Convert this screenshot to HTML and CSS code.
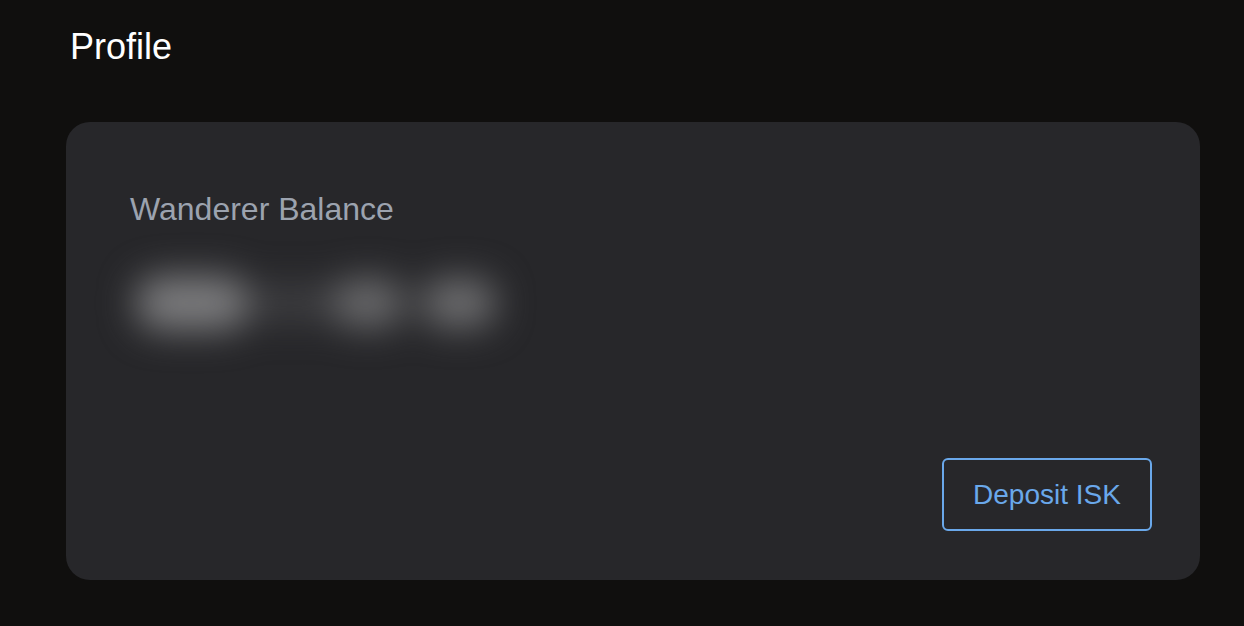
FILE: index.html
```html
<!DOCTYPE html>
<html lang="en">
<head>
<meta charset="utf-8">
<title>Profile</title>
<link rel="stylesheet" href="styles.css">
</head>
<body>
<main class="page">
  <h1 class="title">Profile</h1>
  <section class="card">
    <div class="label">Wanderer Balance</div>
    <div class="amount" aria-hidden="true"><span class="blob blob-a"></span><span class="blob blob-dot"></span><span class="blob blob-b"></span><span class="blob blob-c"></span></div>
    <div class="actions">
      <button class="btn" type="button">Deposit ISK</button>
    </div>
  </section>
</main>
</body>
</html>
```
FILE: styles.css
```css
html, body {
  margin: 0;
  padding: 0;
  background: #100f0e;
}
body {
  font-family: "Liberation Sans", Arial, sans-serif;
  width: 1244px;
  height: 626px;
  overflow: hidden;
}
.page {
  padding: 25px 44px 0 66px;
}
.title {
  margin: 0;
  padding-left: 4px;
  font-size: 36px;
  line-height: 44px;
  font-weight: 400;
  color: #ffffff;
}
.card {
  margin-top: 53px;
  background: #27272a;
  border-radius: 24px;
  padding: 67px 48px 49px 64px;
}
.label {
  font-size: 32px;
  line-height: 40px;
  color: #9ca3af;
}
.amount {
  margin-top: 46px;
  height: 56px;
  display: flex;
  align-items: center;
  filter: blur(18px);
}
.blob {
  display: block;
}
.blob-a { width: 112px; height: 54px; margin-left: 6px; background: #7c7c7e; border-radius: 24px; }
.blob-dot { width: 84px; height: 36px; background: #3e3e41; border-radius: 12px; }
.blob-b { width: 72px; height: 48px; background: #6a6a6c; border-radius: 22px; }
.blob-c { width: 74px; height: 48px; margin-left: 18px; background: #6e6e70; border-radius: 22px; }
.actions {
  margin-top: 127px;
  display: flex;
  justify-content: flex-end;
}
.btn {
  width: 210px;
  height: 73px;
  box-sizing: border-box;
  border: 2px solid #6aa8ea;
  border-radius: 6px;
  background: transparent;
  color: #6aa8ea;
  font-family: "Liberation Sans", Arial, sans-serif;
  font-size: 28px;
  padding: 0;
  display: flex;
  align-items: center;
  justify-content: center;
}
```
